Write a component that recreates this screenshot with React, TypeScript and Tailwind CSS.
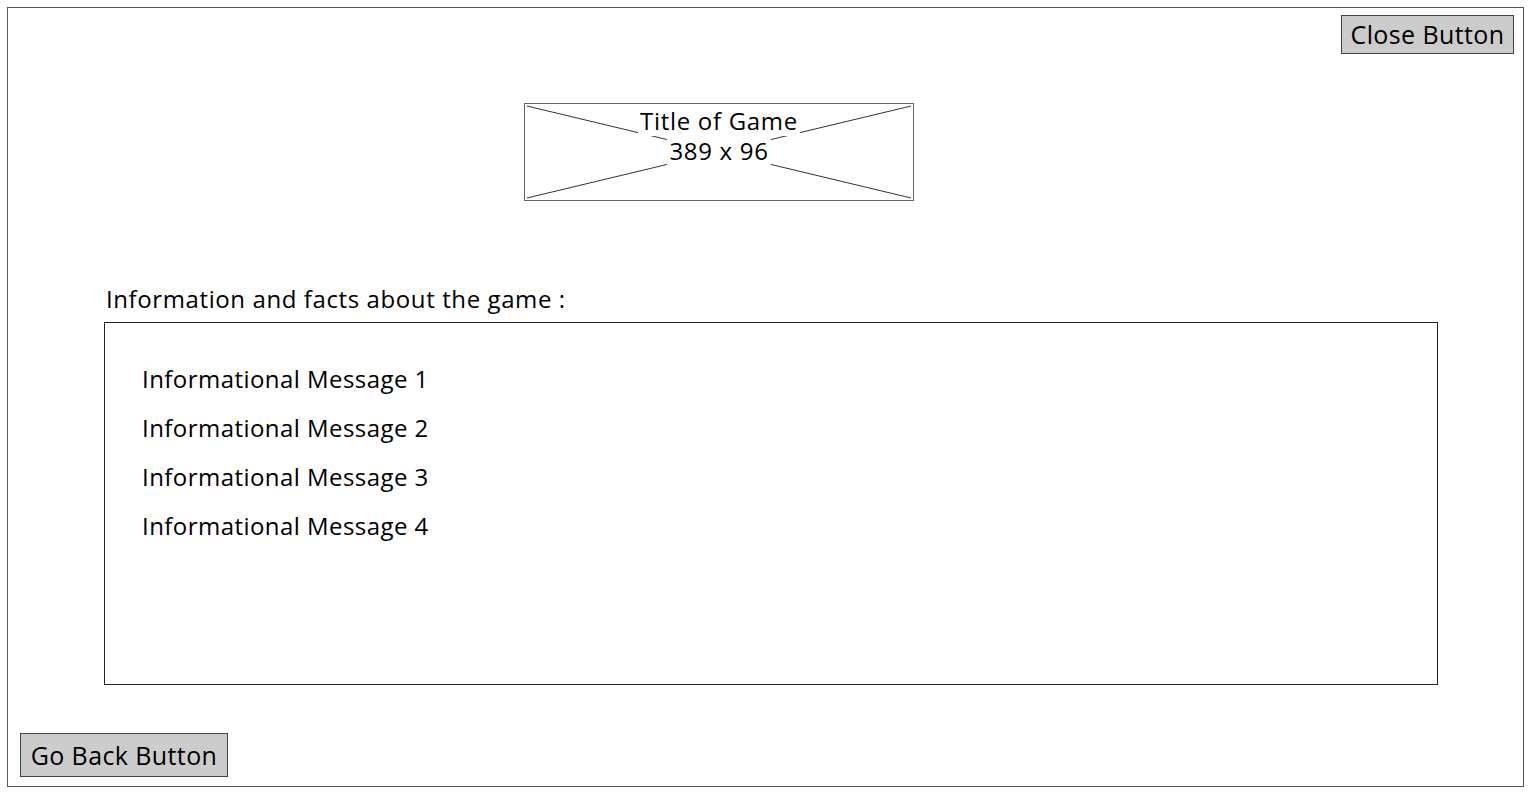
const font = { fontFamily: '"Comic Sans MS", "Open Sans", sans-serif' }

const messages = [
  "Informational Message 1",
  "Informational Message 2",
  "Informational Message 3",
  "Informational Message 4",
]

function ImagePlaceholder() {
  return (
    <div className="relative ml-[516px] mt-[49px] h-[98px] w-[390px] border border-[#666] bg-white">
      <svg className="absolute inset-0 h-full w-full" viewBox="0 0 388 96" preserveAspectRatio="none">
        <line x1="2" y1="2" x2="386" y2="94" stroke="#333" strokeWidth="1" />
        <line x1="386" y1="2" x2="2" y2="94" stroke="#333" strokeWidth="1" />
      </svg>
      <div className="relative flex flex-col items-center pt-[2px] text-[24px] leading-[30px] tracking-[0.7px] text-black">
        <span className="bg-white px-[2px]">Title of Game</span>
        <span className="bg-white px-[2px]">389 x 96</span>
      </div>
    </div>
  )
}

export default function App() {
  return (
    <div className="h-[793px] w-[1531px] bg-white p-[7px]" style={font}>
      <div className="flex h-[780px] w-[1517px] flex-col border border-[#555]">
        <div className="flex justify-end pr-[9px] pt-[7px]">
          <button className="h-[39px] w-[173px] border border-[#444] bg-[#cccccc] text-[25px] leading-none tracking-[0.4px] text-black">
            Close Button
          </button>
        </div>

        <ImagePlaceholder />

        <p className="ml-[98px] mt-[83px] text-[24px] leading-[30px] tracking-[0.6px] text-black">
          Information and facts about the game :
        </p>

        <div className="ml-[96px] mt-[8px] h-[363px] w-[1334px] border border-[#222] pl-[37px] pt-[31px]">
          {messages.map((m) => (
            <p key={m} className="text-[24px] leading-[49px] tracking-[0.45px] text-black">
              {m}
            </p>
          ))}
        </div>

        <div className="mt-auto mb-[9px] ml-[12px]">
          <button className="h-[44px] w-[208px] border border-[#444] bg-[#cccccc] text-[25px] leading-none tracking-[0.4px] text-black">
            Go Back Button
          </button>
        </div>
      </div>
    </div>
  )
}
